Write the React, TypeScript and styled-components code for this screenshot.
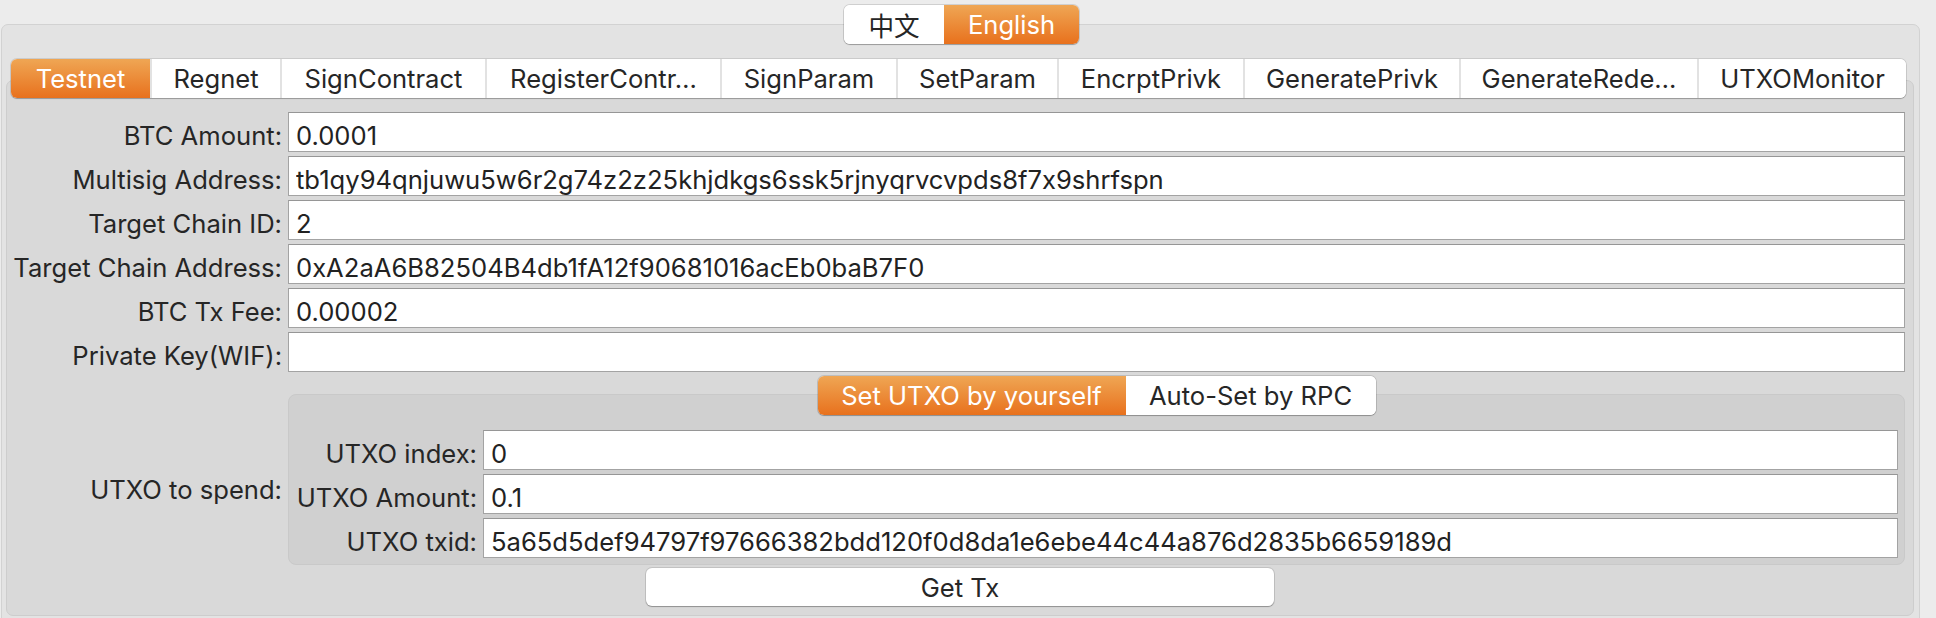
import styled, {createGlobalStyle} from 'styled-components'

const GlobalStyle = createGlobalStyle`
    html, body {
        margin: 0;
        padding: 0;
        background: #ececec;
    }
    body {
        font-family: Inter, "Noto Sans CJK SC", "Liberation Sans", sans-serif;
        font-feature-settings: "calt" 0;
        color: #262626;
    }
`

const tabs = [
    {label: 'Testnet', w: 139},
    {label: 'Regnet', w: 130},
    {label: 'SignContract', w: 205},
    {label: 'RegisterContr…', w: 235},
    {label: 'SignParam', w: 176},
    {label: 'SetParam', w: 161},
    {label: 'EncrptPrivk', w: 186},
    {label: 'GeneratePrivk', w: 216},
    {label: 'GenerateRede…', w: 238},
    {label: 'UTXOMonitor', w: 209},
]

const fields = [
    {label: 'BTC Amount:', value: '0.0001'},
    {label: 'Multisig Address:', value: 'tb1qy94qnjuwu5w6r2g74z2z25khjdkgs6ssk5rjnyqrvcvpds8f7x9shrfspn'},
    {label: 'Target Chain ID:', value: '2'},
    {label: 'Target Chain Address:', value: '0xA2aA6B82504B4db1fA12f90681016acEb0baB7F0'},
    {label: 'BTC Tx Fee:', value: '0.00002'},
    {label: 'Private Key(WIF):', value: ''},
]

const utxoFields = [
    {label: 'UTXO index:', value: '0'},
    {label: 'UTXO Amount:', value: '0.1'},
    {label: 'UTXO txid:', value: '5a65d5def94797f97666382bdd120f0d8da1e6ebe44c44a876d2835b6659189d'},
]

export default function App() {
    return (
        <Page>
            <GlobalStyle/>
            <LangRow>
                <Segmented>
                    <Segment $w={100} $active={false}>中文</Segment>
                    <Segment $w={135} $active>English</Segment>
                </Segmented>
            </LangRow>
            <Outer>
                <TabBar>
                    {tabs.map((t, i) => (
                        <Tab key={t.label} $w={t.w} $active={i === 0}>{t.label}</Tab>
                    ))}
                </TabBar>
                <Content>
                    <Form>
                        {fields.map((f) => (
                            <Row key={f.label}>
                                <Label>{f.label}</Label>
                                <Input readOnly value={f.value}/>
                            </Row>
                        ))}
                        <Row>
                            <SpendLabel>UTXO to spend:</SpendLabel>
                            <UtxoCell>
                                <Segmented>
                                    <Segment $w={308} $active>Set UTXO by yourself</Segment>
                                    <Segment $w={250} $active={false}>Auto-Set by RPC</Segment>
                                </Segmented>
                                <UtxoBox>
                                    {utxoFields.map((f) => (
                                        <UtxoRow key={f.label}>
                                            <Label>{f.label}</Label>
                                            <Input readOnly value={f.value}/>
                                        </UtxoRow>
                                    ))}
                                </UtxoBox>
                            </UtxoCell>
                        </Row>
                    </Form>
                    <Button>Get Tx</Button>
                </Content>
            </Outer>
        </Page>
    )
}

const Page = styled.div`
    width: 1936px;
    height: 618px;
    overflow: hidden;
    padding-top: 5px;
    box-sizing: border-box;
`

const LangRow = styled.div`
    display: flex;
    justify-content: center;
    position: relative;
    z-index: 2;
    margin-bottom: -20px;
    padding-right: 13px;
`

const Segmented = styled.div`
    display: flex;
    height: 39px;
    box-sizing: border-box;
    background: #fff;
    border-radius: 6px;
    overflow: hidden;
    box-shadow: 0 0 0 1px rgba(0, 0, 0, 0.12), 0 1px 1px rgba(0, 0, 0, 0.22);
    position: relative;
    z-index: 2;
`

const Segment = styled.div<{ $w: number; $active: boolean }>`
    width: ${({$w}) => $w}px;
    display: flex;
    align-items: center;
    justify-content: center;
    font-size: 25.6px;
    color: ${({$active}) => ($active ? '#fff' : '#262626')};
    background: ${({$active}) => ($active ? 'linear-gradient(#efa654, #e8711d)' : '#fff')};
`

const Outer = styled.div`
    margin: 0 16px 0 1px;
    height: 640px;
    box-sizing: border-box;
    background: #e3e3e3;
    border: 1px solid #d2d2d2;
    border-radius: 7px;
    padding: 34px 5px 0 4px;
`

const TabBar = styled.div`
    display: flex;
    height: 39px;
    margin: 0 0 -18px 5px;
    background: #fff;
    border-radius: 6px;
    overflow: hidden;
    box-shadow: 0 0 0 1px rgba(0, 0, 0, 0.1), 0 1px 1px rgba(0, 0, 0, 0.22);
    position: relative;
    z-index: 1;
    width: 1895px;
`

const Tab = styled.div<{ $w: number; $active: boolean }>`
    width: ${({$w}) => $w}px;
    flex: none;
    box-sizing: border-box;
    display: flex;
    align-items: center;
    justify-content: center;
    font-size: 25.6px;
    white-space: nowrap;
    color: ${({$active}) => ($active ? '#fff' : '#262626')};
    background: ${({$active}) => ($active ? 'linear-gradient(#efa654, #e8711d)' : '#fff')};
    border-left: 2px solid #e2e2e2;

    &:first-child {
        border-left: none;
    }
`

const Content = styled.div`
    background: #d9d9d9;
    border: 1px solid #cdcdcd;
    border-radius: 7px;
    height: 536px;
    box-sizing: border-box;
    padding: 31px 0 0 0;
`

const Form = styled.div`
    display: flex;
    flex-direction: column;
    gap: 4px;
    padding: 0 8px 0 5px;
`

const Row = styled.div`
    display: grid;
    grid-template-columns: 270px 1fr;
    grid-template-rows: minmax(40px, auto);
    column-gap: 6px;
`

const Label = styled.div`
    font-size: 25.6px;
    line-height: 30px;
    text-align: right;
    white-space: nowrap;
    align-self: center;
    padding-top: 8px;
`

const SpendLabel = styled(Label)`
    padding-top: 38px;
`

const Input = styled.input`
    height: 40px;
    box-sizing: border-box;
    border: 1px solid #a3a3a3;
    border-top-color: #969696;
    background: #fff;
    padding: 7px 7px 0;
    font-family: inherit;
    font-feature-settings: "calt" 0;
    font-size: 25.6px;
    color: #222;
    outline: none;
    width: 100%;
    margin: 0;
`

const UtxoCell = styled.div`
    display: flex;
    flex-direction: column;
    align-items: center;
`

const UtxoBox = styled.div`
    align-self: stretch;
    margin-top: -21px;
    background: #d0d0d0;
    border: 1px solid #c9c9c9;
    border-radius: 8px;
    padding: 35px 6px 6px 4px;
    display: flex;
    flex-direction: column;
    gap: 4px;
`

const UtxoRow = styled.div`
    display: grid;
    grid-template-columns: 184px 1fr;
    grid-template-rows: 40px;
    column-gap: 6px;
`

const Button = styled.div`
    width: 628px;
    height: 38px;
    margin: 3px auto 0;
    background: #fff;
    border-radius: 6px;
    box-shadow: 0 0 0 1px rgba(0, 0, 0, 0.1), 0 1px 1px rgba(0, 0, 0, 0.25);
    display: flex;
    align-items: center;
    justify-content: center;
    font-size: 25.6px;
    color: #262626;
`
